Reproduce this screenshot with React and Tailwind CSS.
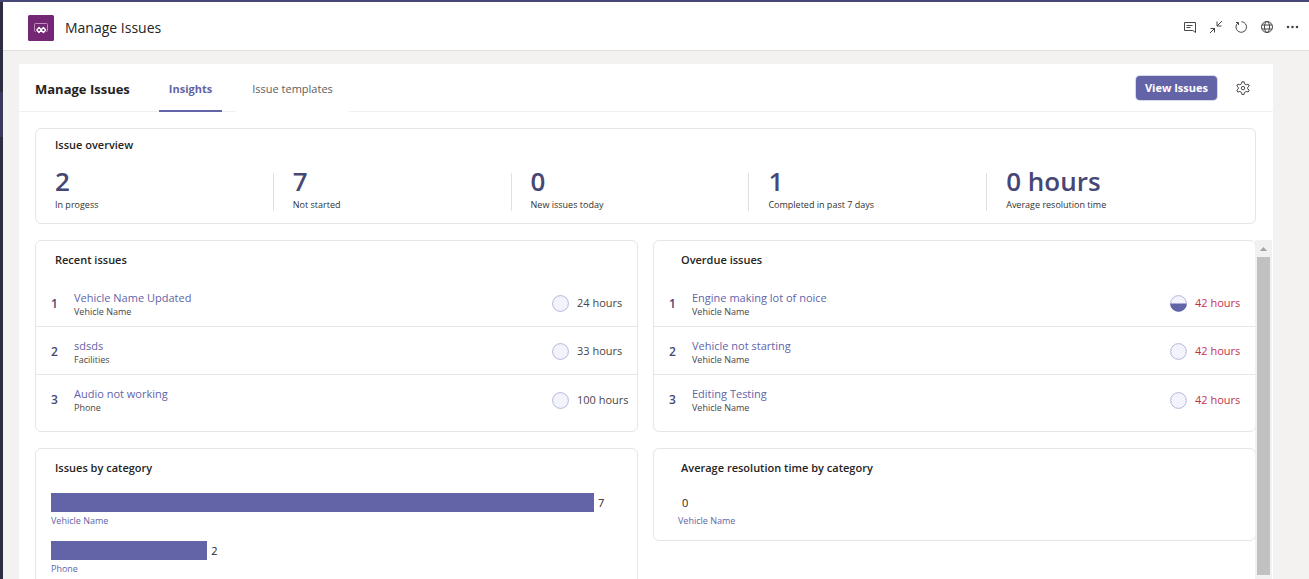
import React from "react";

const STATS = [
  { value: "2", label: "In progess" },
  { value: "7", label: "Not started" },
  { value: "0", label: "New issues today" },
  { value: "1", label: "Completed in past 7 days" },
  { value: "0 hours", label: "Average resolution time" },
];

const RECENT = [
  { title: "Vehicle Name Updated", category: "Vehicle Name", time: "24 hours" },
  { title: "sdsds", category: "Facilities", time: "33 hours" },
  { title: "Audio not working", category: "Phone", time: "100 hours" },
];

const OVERDUE = [
  { title: "Engine making lot of noice", category: "Vehicle Name", time: "42 hours", half: true },
  { title: "Vehicle not starting", category: "Vehicle Name", time: "42 hours" },
  { title: "Editing Testing", category: "Vehicle Name", time: "42 hours" },
];

const BY_CATEGORY = [
  { name: "Vehicle Name", count: 7 },
  { name: "Phone", count: 2 },
];

function Icon({ children, label }) {
  return (
    <button type="button" aria-label={label} className="text-[#484644]">
      <svg viewBox="0 0 16 16" className="size-4" fill="none" stroke="currentColor" strokeWidth="1">
        {children}
      </svg>
    </button>
  );
}

function AppHeader() {
  return (
    <header className="flex h-[49px] shrink-0 items-center border-b border-[#e1dfdd] bg-white pl-[25px] pr-2">
      <svg viewBox="0 0 26 26" className="mt-1 size-[26px]" aria-hidden="true">
        <rect width="26" height="26" rx="1.5" fill="#742774" />
        <path d="M8 16.500H7.500Q6.500 16.500 6.500 15.500V9.500Q6.500 8.500 7.500 8.500H18.500Q19.500 8.500 19.500 9.500V15.500Q19.500 16.500 18.500 16.500H18" fill="none" stroke="#c08fc0" />
        <path d="M11 12.500L13.400 15L11 17.500L8.800 15ZM15.400 12.500L17.600 15L15.400 17.500L13 15Z" fill="none" stroke="#fff" strokeWidth="1.300" strokeLinejoin="round" />
      </svg>
      <h1 className="ml-[11px] mt-1 text-sm font-medium text-[#252423]">Manage Issues</h1>
      <div className="mt-px ml-auto flex items-center gap-[10px]">
        <Icon label="Chat">
          <path d="M3.500 3.500H14.500V13.500L11.800 11.500H3.500ZM5.500 6.500H11.500M5.500 8.500H9.500" />
        </Icon>
        <Icon label="Collapse">
          <path d="M15 2L10 7M10 2.500V7H14.500M3 14L8 9M3.500 9.500H7.500V13.500" />
        </Icon>
        <Icon label="Reload">
          <path d="M5 3.800A5.300 5.300 0 1 0 8.500 2.700M3 3.500H5.500V6" />
        </Icon>
        <Icon label="Open website">
          <circle cx="8" cy="8" r="5.500" />
          <ellipse cx="8" cy="8" rx="2.500" ry="5.500" />
          <path d="M3 6H13M3 10H13" />
        </Icon>
        <Icon label="More">
          <g fill="currentColor" stroke="none">
            <circle cx="3" cy="8" r="1.300" />
            <circle cx="7.500" cy="8" r="1.300" />
            <circle cx="12" cy="8" r="1.300" />
          </g>
        </Icon>
      </div>
    </header>
  );
}

function TabBar() {
  return (
    <div className="flex h-12 shrink-0 items-stretch border-b border-[#f0f0f0] px-4">
      <h2 className="mr-[19px] flex items-center pt-1 pr-[10px] text-[13px] font-bold text-[#252423]">Manage Issues</h2>
      <nav className="flex items-stretch gap-[14px]">
        <a href="#insights" aria-current="page" className="-mb-px flex items-center border-b-2 border-[#6264a7] px-[10px] pt-1 text-[11px] font-bold text-[#6264a7]">
          Insights
        </a>
        <a href="#templates" className="-mb-px flex items-center bg-white px-4 pt-[3px] text-[11px] text-[#605e5c]">
          Issue templates
        </a>
      </nav>
      <div className="ml-auto flex items-center gap-[18px] pr-[6px]">
        <button type="button" className="mt-px h-6 rounded-sm bg-[#6264a7] px-[9px] text-[11px] font-bold text-white ring-1 ring-[#d8d8e8]">
          View Issues
        </button>
        <Icon label="Settings">
          <path d="M6.500 3.800L6.900 1.800H9.100L9.500 3.800L11.200 4.800L13.100 4.100L14.200 6L12.700 7.300V8.900L14.200 10.200L13.100 12.100L11.200 11.400L9.500 12.400L9.100 14.400H6.900L6.500 12.400L4.800 11.400L2.900 12.100L1.800 10.200L3.300 8.900V7.300L1.800 6L2.900 4.100L4.800 4.800Z" strokeLinejoin="round" />
          <circle cx="8" cy="8.100" r="1.700" />
        </Icon>
      </div>
    </div>
  );
}

function Overview() {
  return (
    <section className="mr-4 shrink-0 rounded-md border border-[#e6e6e6] pb-3">
      <h3 className="px-[19px] pt-2 text-[11px] leading-4 font-semibold text-[#252423]">Issue overview</h3>
      <dl className="mt-3 grid grid-cols-5 pr-[30px]">
        {STATS.map((s) => (
          <div key={s.label} className="relative flex h-[46px] flex-col-reverse justify-between pl-[19px] not-last:after:absolute not-last:after:right-0 not-last:after:bottom-0 not-last:after:h-[38px] not-last:after:w-px not-last:after:bg-[#e1e1e1]">
            <dt className="text-[9px] leading-3 text-[#323130]">{s.label}</dt>
            <dd className="text-[26px] leading-8 font-semibold text-[#464775]">{s.value}</dd>
          </div>
        ))}
      </dl>
    </section>
  );
}

function Card({ title, indent = "pl-[19px]", children }) {
  return (
    <section className="rounded-md border border-[#e6e6e6]">
      <h3 className={`${indent} pt-[11px] text-[11px] leading-4 font-semibold text-[#252423]`}>{title}</h3>
      {children}
    </section>
  );
}

function StatusCircle({ half }) {
  return (
    <svg viewBox="0 0 17 17" className="size-[17px] shrink-0" aria-hidden="true">
      <circle cx="8.500" cy="8.500" r="7.900" fill="#f3f3fc" stroke="#b5b6dc" />
      {half && <path d="M0.200 8.500H16.800A8.300 8.300 0 0 1 0.200 8.500Z" fill="#6264a7" />}
    </svg>
  );
}

function IssueList({ items, overdue }) {
  return (
    <ol className="mt-[11px] divide-y divide-[#e6e6e6] pb-2">
      {items.map((it, i) => (
        <li key={it.title} className="flex h-12 items-center pt-[2px]">
          <span className="w-[38px] pl-[15px] text-xs font-semibold text-[#464775]">{i + 1}</span>
          <div className="min-w-0 flex-1 pt-[2px]">
            <a href="#issue" className="block text-[11px] leading-[14px] text-[#6264a7]">{it.title}</a>
            <p className="text-[9px] leading-[14px] text-[#484644]">{it.category}</p>
          </div>
          <StatusCircle half={it.half} />
          <span className={overdue ? "w-[68px] pl-2 text-[11px] text-[#c4314b]" : "w-[68px] pl-2 text-[11px] text-[#484644]"}>
            {it.time}
          </span>
        </li>
      ))}
    </ol>
  );
}

function CategoryBars() {
  return (
    <ul className="mt-[17px] space-y-[14px] px-[15px] pb-4">
      {BY_CATEGORY.map((c) => (
        <li key={c.name}>
          <div className="flex items-center gap-1 pr-6 text-[11px] leading-[19px] text-[#252423]">
            <div className="h-[19px] bg-[#6264a7]" style={{ width: `${(c.count / 7) * 100}%` }} />
            <span className="w-0">{c.count}</span>
          </div>
          <a href="#category" className="mt-[3px] block text-[9px] leading-3 text-[#6264a7]">{c.name}</a>
        </li>
      ))}
    </ul>
  );
}

function ScrollBar() {
  return (
    <div className="flex w-[17px] shrink-0 flex-col items-center bg-[#f1f1f1] pb-1" aria-hidden="true">
      <svg viewBox="0 0 17 17" className="size-[17px] shrink-0">
        <path d="M5 11L8.500 7L12 11Z" fill="#a3a3a3" />
      </svg>
      <div className="w-[13px] flex-1 bg-[#c1c1c1]" />
    </div>
  );
}

export default function App() {
  return (
    <div className="flex h-screen flex-col overflow-hidden border-t-2 border-[#464775] bg-[#f3f2f1] font-['Open_Sans','Noto_Sans',sans-serif]">
      <div className="flex min-h-0 flex-1">
        <div className="flex w-[3px] shrink-0 flex-col bg-[#2d2c40]">
          <div className="mt-[90px] h-[45px] bg-[#3b3a5e]" />
        </div>
        <div className="flex min-w-0 flex-1 flex-col">
          <AppHeader />
          <main className="mt-[13px] mr-9 ml-4 flex min-h-0 flex-1 flex-col bg-white">
            <TabBar />
            <div className="flex min-h-0 flex-1 flex-col gap-4 pt-4 pr-px pl-4">
              <Overview />
              <div className="flex min-h-0 flex-1">
                <div className="min-w-0 flex-1 overflow-hidden">
                  <div className="-mr-px grid grid-cols-2 items-start gap-x-[15px] gap-y-4">
                    <Card title="Recent issues">
                      <IssueList items={RECENT} />
                    </Card>
                    <Card title="Overdue issues" indent="pl-[27px]">
                      <IssueList items={OVERDUE} overdue />
                    </Card>
                    <Card title="Issues by category">
                      <CategoryBars />
                    </Card>
                    <Card title="Average resolution time by category" indent="pl-[27px]">
                      <div className="mt-[17px] pb-[13px] pl-6">
                        <p className="pl-1 text-[11px] leading-[19px] text-[#252423]">0</p>
                        <a href="#category" className="mt-[3px] block text-[9px] leading-3 text-[#6264a7]">Vehicle Name</a>
                      </div>
                    </Card>
                  </div>
                </div>
                <ScrollBar />
              </div>
            </div>
          </main>
        </div>
      </div>
    </div>
  );
}
